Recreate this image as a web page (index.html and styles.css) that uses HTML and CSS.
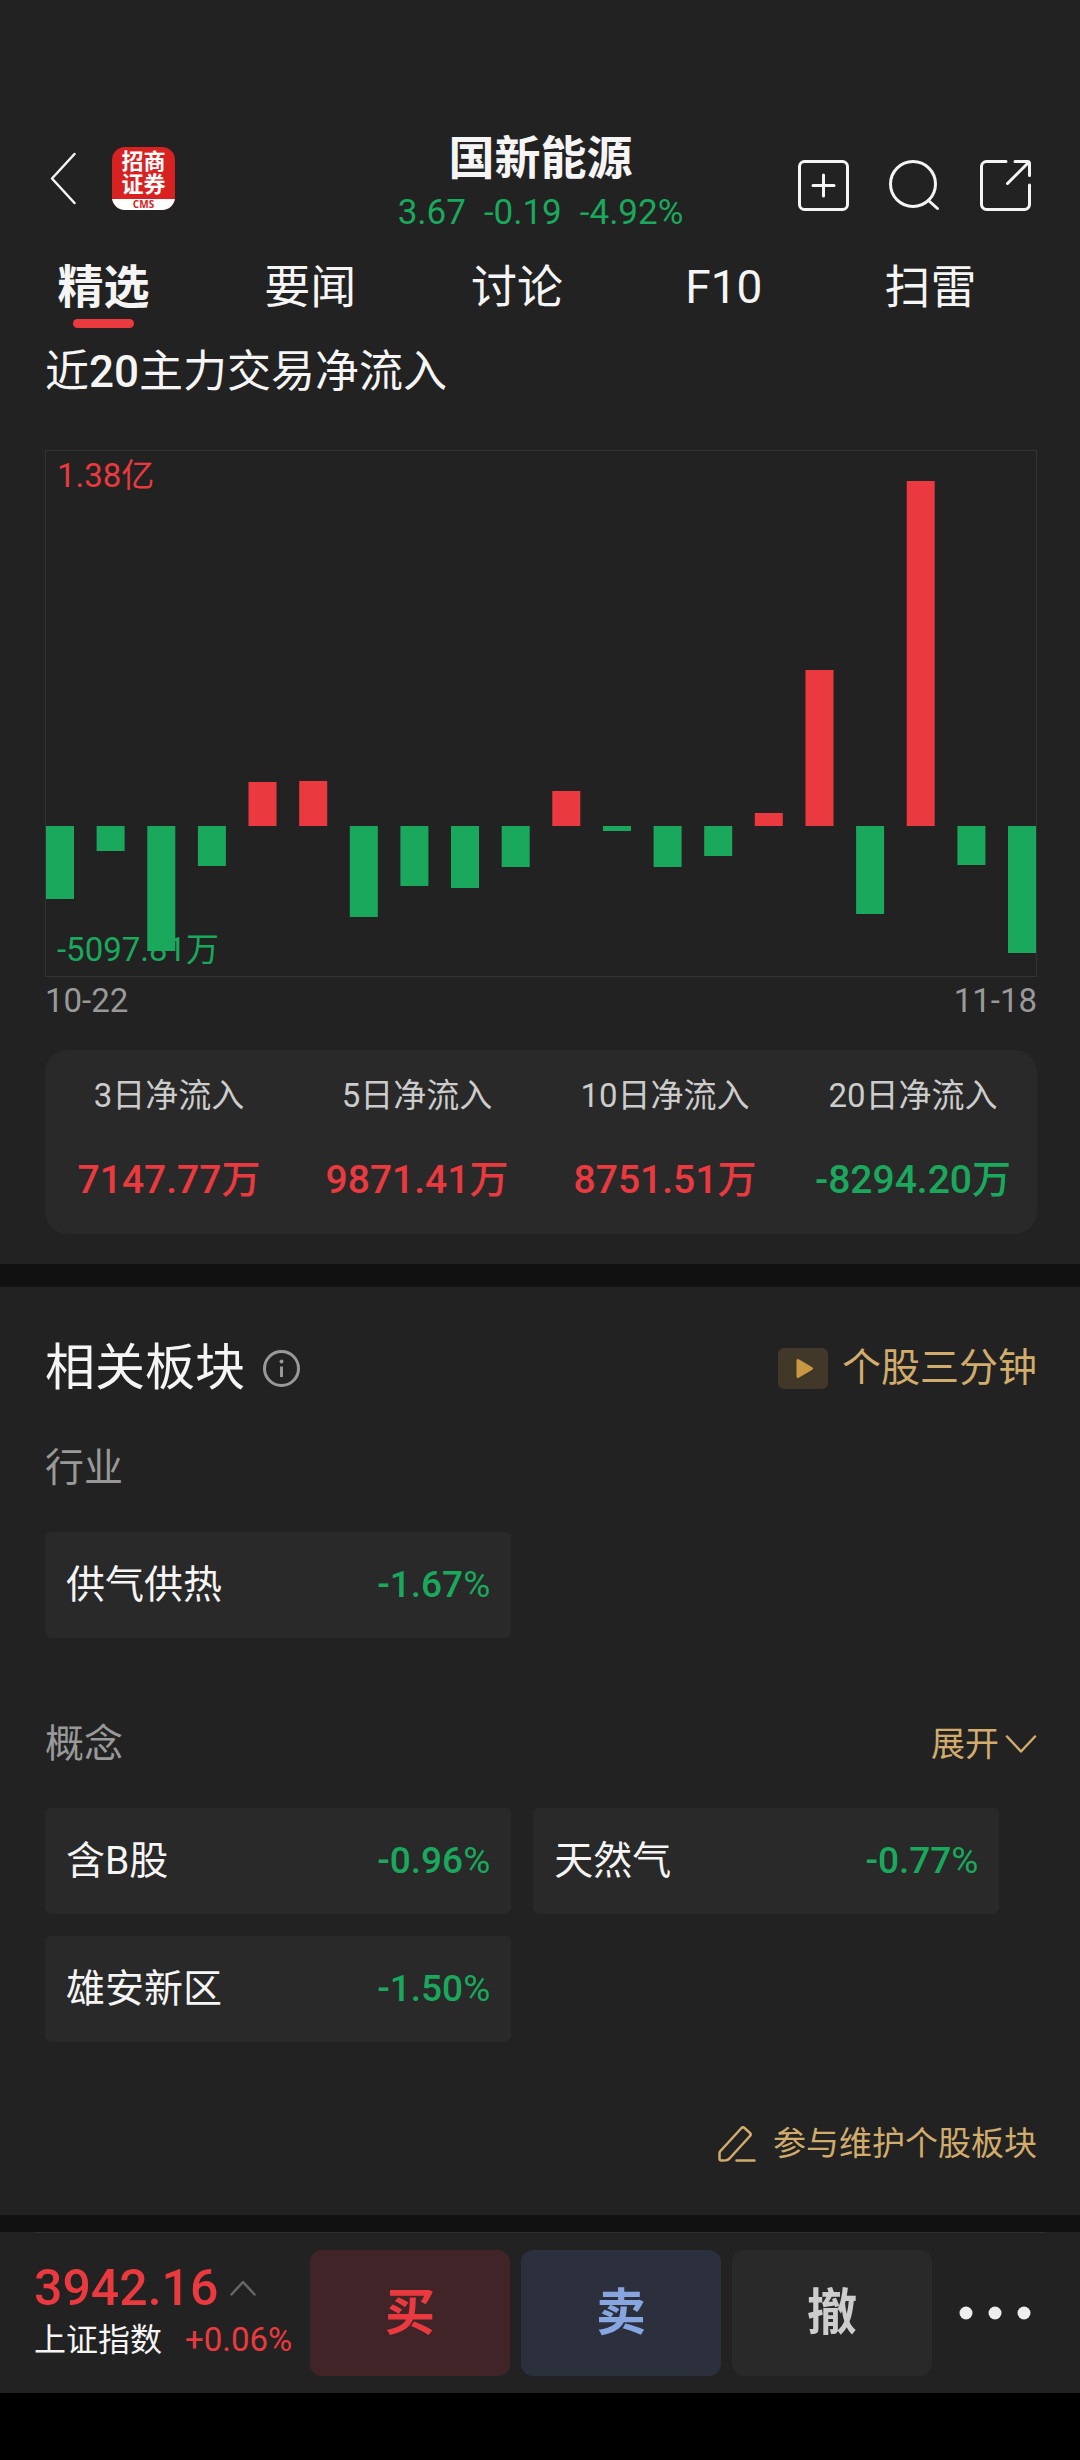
FILE: index.html
```html
<!DOCTYPE html>
<html lang="zh-CN">
<head>
<meta charset="utf-8">
<meta name="viewport" content="width=device-width, initial-scale=1">
<title>国新能源</title>
<link rel="stylesheet" href="styles.css">
</head>
<body>
<div class="app">
  <header class="header">
    <div class="header-left">
      <button class="icon-btn" type="button" aria-label="返回">
        <svg width="26" height="63" viewBox="0 0 26 63"><path d="M24.500 7 2 31.500 24.500 56" stroke-width="2.500"/></svg>
      </button>
      <div class="logo">
        <span class="logo-name">招商<br>证券</span>
        <span class="logo-sub">CMS</span>
      </div>
    </div>
    <div class="header-title">
      <h1>国新能源</h1>
      <p class="quote down"><span>3.67</span><span>-0.19</span><span>-4.92%</span></p>
    </div>
    <div class="header-right">
      <button class="icon-btn" type="button" aria-label="加自选">
        <svg width="51" height="51" viewBox="0 0 51 51"><rect x="1.500" y="1.500" width="48" height="48" rx="5"/><path d="M25.500 15v21M15 25.500h21"/></svg>
      </button>
      <button class="icon-btn" type="button" aria-label="搜索">
        <svg width="51" height="51" viewBox="0 0 51 51"><circle cx="24" cy="24" r="22.500"/><path d="M39.500 40.500 48.500 48.500"/></svg>
      </button>
      <button class="icon-btn" type="button" aria-label="分享">
        <svg width="51" height="51" viewBox="0 0 51 51"><path d="M26 1.500H6.500a5 5 0 0 0-5 5v38a5 5 0 0 0 5 5h38a5 5 0 0 0 5-5V25M35 1.500H47.500a2 2 0 0 1 2 2V15.500M48.500 2.500 27.500 23.500"/></svg>
      </button>
    </div>
  </header>

  <nav class="tabs">
    <a class="tab active" href="#picks">精选</a>
    <a class="tab" href="#news">要闻</a>
    <a class="tab" href="#talk">讨论</a>
    <a class="tab" href="#f10">F10</a>
    <a class="tab" href="#risk">扫雷</a>
  </nav>

  <main>
    <section class="flow" id="picks">
      <h2 class="flow-title">近<b>20</b>主力交易净流入</h2>
      <div class="chart">
        <span class="chart-max up">1.38亿</span>
        <span class="chart-min down">-5097.81万</span>
        <svg class="bars" viewBox="0 0 990 525" preserveAspectRatio="none" role="img" aria-label="近20日主力净流入柱状图">
          <g class="bar-down">
            <rect x="0" y="375" width="28" height="73"/>
            <rect x="50.600" y="375" width="28" height="25"/>
            <rect x="101.300" y="375" width="28" height="125"/>
            <rect x="151.900" y="375" width="28" height="40"/>
            <rect x="303.800" y="375" width="28" height="91"/>
            <rect x="354.400" y="375" width="28" height="60"/>
            <rect x="405" y="375" width="28" height="62"/>
            <rect x="455.700" y="375" width="28" height="41"/>
            <rect x="557" y="375" width="28" height="5"/>
            <rect x="607.600" y="375" width="28" height="41"/>
            <rect x="658.200" y="375" width="28" height="30"/>
            <rect x="810.100" y="375" width="28" height="88"/>
            <rect x="911.400" y="375" width="28" height="39"/>
            <rect x="962" y="375" width="28" height="127"/>
          </g>
          <g class="bar-up">
            <rect x="202.500" y="331" width="28" height="44"/>
            <rect x="253.200" y="330" width="28" height="45"/>
            <rect x="506.300" y="340" width="28" height="35"/>
            <rect x="708.800" y="362" width="28" height="13"/>
            <rect x="759.500" y="219" width="28" height="156"/>
            <rect x="860.700" y="30" width="28" height="345"/>
          </g>
        </svg>
      </div>
      <div class="chart-dates"><span>10-22</span><span>11-18</span></div>
      <dl class="stats">
        <div><dt>3日净流入</dt><dd class="up">7147.77万</dd></div>
        <div><dt>5日净流入</dt><dd class="up">9871.41万</dd></div>
        <div><dt>10日净流入</dt><dd class="up">8751.51万</dd></div>
        <div><dt>20日净流入</dt><dd class="down">-8294.20万</dd></div>
      </dl>
    </section>

    <section class="sectors">
      <div class="row">
        <div class="sectors-title">
          <h2>相关板块</h2>
          <button class="icon-btn muted" type="button" aria-label="说明">
            <svg width="37" height="37" viewBox="0 0 37 37"><circle cx="18.500" cy="18.500" r="17"/><path d="M18.500 16.500v10.500" stroke-linecap="butt"/><circle cx="18.500" cy="11.500" r="2" fill="currentColor" stroke="none"/></svg>
          </button>
        </div>
        <a class="gold video" href="#video">
          <svg width="50" height="41" viewBox="0 0 50 41"><rect width="50" height="41" rx="6" fill="#41382a" stroke="none"/><path d="M20 12.500v16L33.500 20.500Z" fill="#c99843" stroke="#c99843" stroke-width="3"/></svg>
          个股三分钟
        </a>
      </div>

      <h3 class="group">行业</h3>
      <div class="cards">
        <a class="card" href="#s1"><span>供气供热</span><b class="down">-1.67<i>%</i></b></a>
      </div>

      <div class="row row-concept">
        <h3>概念</h3>
        <button class="gold expand" type="button">展开
          <svg width="32" height="20" viewBox="0 0 32 20"><path d="M2 2.500 16 17.500 30 2.500" stroke-width="2.500"/></svg>
        </button>
      </div>
      <div class="cards">
        <a class="card" href="#s2"><span>含B股</span><b class="down">-0.96<i>%</i></b></a>
        <a class="card" href="#s3"><span>天然气</span><b class="down">-0.77<i>%</i></b></a>
        <a class="card" href="#s4"><span>雄安新区</span><b class="down">-1.50<i>%</i></b></a>
      </div>

      <a class="gold edit" href="#edit">
        <svg width="38" height="38" viewBox="0 0 38 38"><path d="M2 26.500 23.500 3Q25 1.500 26.500 3L32 8Q33.500 9.500 32 11L11.500 33.500Q10 35 8 35.200L3.500 35.500Q1.500 35.500 1.500 33.500L1.500 28.500Q1.500 27.200 2 26.500ZM18.500 35.500H36.500" stroke-width="2.500"/></svg>
        参与维护个股板块
      </a>
    </section>
  </main>

  <footer class="trade">
    <div class="trade-inner">
      <div class="index">
        <div class="index-top up">
          <strong>3942.16</strong>
          <svg width="26" height="16" viewBox="0 0 26 16"><path d="M1.500 14.500 13 2 24.500 14.500" stroke-width="2.500"/></svg>
        </div>
        <div class="index-sub"><span>上证指数</span><span class="index-change up">+0.06%</span></div>
      </div>
      <button class="trade-btn buy" type="button">买</button>
      <button class="trade-btn sell" type="button">卖</button>
      <button class="trade-btn cancel" type="button">撤</button>
      <button class="icon-btn more" type="button" aria-label="更多">
        <svg width="72" height="14" viewBox="0 0 72 14"><g fill="#eee" stroke="none"><circle cx="7" cy="7" r="6.500"/><circle cx="36" cy="7" r="6.500"/><circle cx="65" cy="7" r="6.500"/></g></svg>
      </button>
    </div>
  </footer>
</div>
</body>
</html>
```
FILE: styles.css
```css
:root {
  --red: #ea3a3f;
  --green: #1aa85c;
  --gold: #d1ac6c;
  --text: #f5f5f5;
  --muted: #999;
  --panel: #222;
  --card: #292929;
  --gap: #111;
}

* { box-sizing: border-box; }

body {
  margin: 0;
  padding-bottom: 67px;
  background: #000;
  color: var(--text);
  font-family: Roboto, "Noto Sans CJK SC", sans-serif;
}

h1, h2, h3, p, dl, dt, dd { margin: 0; font-weight: 400; }
a { color: inherit; text-decoration: none; }

button {
  padding: 0;
  border: 0;
  background: none;
  color: inherit;
  font: inherit;
}

svg {
  display: block;
  flex: none;
  fill: none;
  stroke: currentColor;
  stroke-width: 3;
  stroke-linecap: round;
  stroke-linejoin: round;
}

.up { color: var(--red); }
.down { color: var(--green); }
.gold { color: var(--gold); }
.muted { color: var(--muted); }

.app { background: var(--panel); }

/* Header */
.header {
  display: grid;
  grid-template-columns: 1fr auto 1fr;
  align-items: start;
  padding: 130px 49px 0 50px;
}

.header-left {
  display: flex;
  gap: 36px;
  padding-top: 17px;
}

.logo {
  display: flex;
  flex-direction: column;
  width: 63px;
  height: 63px;
  overflow: hidden;
  border-radius: 13px;
  background: #d82222;
  color: #fff;
  text-align: center;
}

.logo-name {
  flex: 1;
  padding-top: 3px;
  font-size: 22px;
  font-weight: 700;
  line-height: 23px;
}

.logo-sub {
  background: #fff;
  color: #d82222;
  font-family: "Open Sans", sans-serif;
  font-size: 10px;
  font-weight: 700;
  line-height: 11px;
}

.header-title { text-align: center; }

.header-title h1 {
  font-size: 46px;
  font-weight: 700;
  line-height: 56px;
}

.quote {
  display: flex;
  justify-content: center;
  gap: 18px;
  margin-top: 5px;
  font-size: 35px;
  line-height: 44px;
}

.header-right {
  display: flex;
  justify-content: flex-end;
  gap: 40px;
  padding-top: 30px;
}

/* Tabs */
.tabs {
  display: grid;
  grid-template-columns: repeat(5, 1fr);
  padding: 22px 46px 0 0;
}

.tab {
  font-size: 46px;
  line-height: 60px;
  text-align: center;
}

.tab.active { font-weight: 700; }

.tab.active::after {
  content: "";
  display: block;
  width: 61px;
  height: 9px;
  margin: 2px auto 0;
  border-radius: 5px;
  background: var(--red);
}

/* Net inflow */
.flow {
  padding: 14px 43px 30px 45px;
  border-bottom: 23px solid var(--gap);
}

.flow-title {
  font-size: 44px;
  line-height: 60px;
}

.flow-title b { font-weight: 500; }

.chart {
  position: relative;
  margin-top: 48px;
  border: 1px solid #333;
  font-size: 33px;
  line-height: 40px;
}

.chart-max, .chart-min {
  position: absolute;
  left: 11px;
}

.chart-max { top: 5px; }
.chart-min { bottom: 6px; }

.bars {
  position: relative;
  width: 100%;
  height: 525px;
  stroke: none;
}

.bar-up { fill: var(--red); }
.bar-down { fill: var(--green); }

.chart-dates {
  display: flex;
  justify-content: space-between;
  margin-top: 4px;
  color: var(--muted);
  font-size: 33px;
  line-height: 40px;
}

.stats {
  display: grid;
  grid-template-columns: repeat(4, 1fr);
  margin-top: 29px;
  padding: 23px 0 29px;
  border-radius: 22px;
  background: var(--card);
  text-align: center;
}

.stats dt {
  color: #ccc;
  font-size: 33px;
  line-height: 46px;
}

.stats dd {
  margin-top: 36px;
  font-size: 39px;
  line-height: 50px;
  font-weight: 500;
}

/* Related sectors */
.sectors {
  display: flex;
  flex-direction: column;
  padding: 46px 43px 46px 45px;
  border-bottom: 17px solid var(--gap);
}

.row {
  display: flex;
  align-items: center;
  justify-content: space-between;
}

.sectors-title {
  display: flex;
  align-items: center;
  gap: 18px;
}

.sectors-title h2 {
  font-size: 50px;
  line-height: 70px;
}

.video {
  display: flex;
  align-items: center;
  gap: 14px;
  font-size: 39px;
  line-height: 50px;
}

.sectors h3 {
  color: var(--muted);
  font-size: 39px;
  line-height: 50px;
}

.group { margin-top: 40px; }
.row-concept { margin-top: 81px; }

.expand {
  display: flex;
  align-items: center;
  gap: 6px;
  font-size: 34px;
  line-height: 50px;
}

.cards {
  display: grid;
  grid-template-columns: repeat(2, 47%);
  gap: 22px;
  margin-top: 39px;
}

.card {
  display: flex;
  align-items: center;
  justify-content: space-between;
  padding: 28px 21px;
  border-radius: 6px;
  background: var(--card);
  font-size: 39px;
  line-height: 50px;
}

.card b {
  font-size: 37px;
  font-weight: 500;
}

.card i {
  font-style: normal;
  font-weight: 400;
}

.edit {
  display: flex;
  align-items: center;
  align-self: flex-end;
  gap: 17px;
  margin-top: 77px;
  font-size: 33px;
  line-height: 50px;
}

/* Trade bar */
.trade { padding: 0 34px; }

.trade-inner {
  display: grid;
  grid-template-columns: 265px repeat(3, 1fr) 103px;
  gap: 11px;
  padding: 17px 0;
  border-top: 1px solid #2e2e2e;
}

.index { padding-top: 8px; }

.index-top {
  display: flex;
  align-items: center;
  gap: 12px;
}

.index-top strong {
  font-size: 50px;
  font-weight: 500;
  line-height: 60px;
}

.index-top svg { color: #666; }

.index-sub {
  display: flex;
  gap: 23px;
  font-size: 32px;
  line-height: 44px;
  white-space: nowrap;
}

.index-change { font-size: 33px; }

.trade-btn {
  height: 126px;
  border-radius: 12px;
  font-size: 50px;
  font-weight: 700;
  line-height: 60px;
}

.buy { background: #412427; color: var(--red); }
.sell { background: #2b303c; color: #87a5df; }
.cancel { background: #292929; color: #cdcdcd; }

.more {
  display: flex;
  align-items: center;
  justify-content: center;
}
```
